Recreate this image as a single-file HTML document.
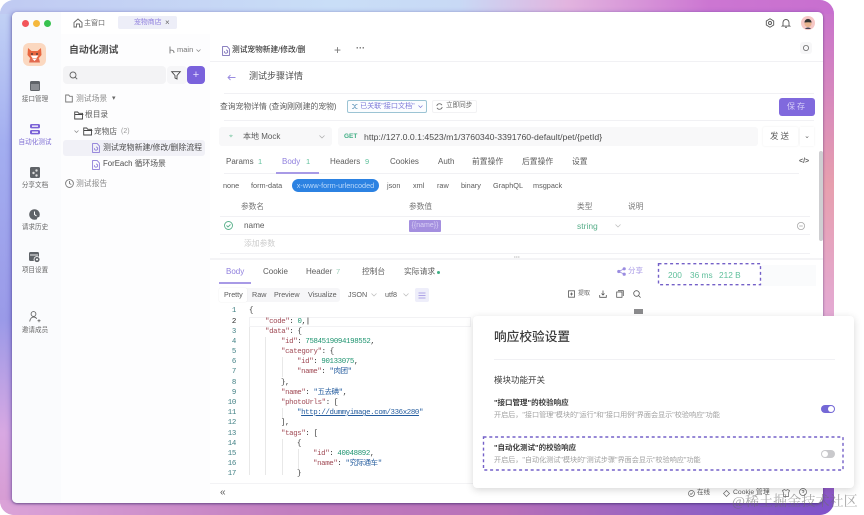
<!DOCTYPE html>
<html lang="zh"><head><meta charset="utf-8"><style>
*{box-sizing:border-box}
html,body{margin:0;padding:0;width:864px;height:515px;overflow:hidden;background:#fff}
body{font-family:"Liberation Sans","Noto Sans CJK SC",sans-serif;color:#555;position:relative}
#all{position:absolute;left:0;top:0;width:864px;height:515px;filter:blur(.3px)}
.a{position:absolute;white-space:nowrap;line-height:1}
#frame{position:absolute;left:0;top:0;width:834px;height:515px;border-radius:14px;overflow:hidden;
background:linear-gradient(180deg,#c4d4f5 0%,#a3aef0 28%,#9a9ae8 62%,#d8a8e2 84%,#d79ad0 100%)}
#ftop{position:absolute;left:0;top:0;width:834px;height:14px;background:linear-gradient(90deg,#c0caf2 0%,#c9def7 40%,#c8d9f5 55%,#e2b4df 68%,#cc76d2 85%,#c86fcf 100%)}
#fbot{position:absolute;left:0;top:500px;width:834px;height:15px;background:linear-gradient(90deg,#dba3d8 0%,#c27ebf 35%,#b870b8 60%,#8f60c4 85%,#7f52ca 100%)}
#fr{position:absolute;left:822px;top:14px;width:12px;height:486px;background:linear-gradient(180deg,#c974cc 0%,#e79fae 35%,#e3abd8 65%,#cb8ad8 85%,#8a55c8 100%)}
#win{position:absolute;left:12px;top:12px;width:811px;height:491px;background:#fff;border-radius:5px;box-shadow:0 1px 2px rgba(50,30,90,.55),-2px 0 5px rgba(70,60,170,.3)}
#side{position:absolute;left:12px;top:12px;width:49px;height:491px;background:#fafbfd;border-radius:5px 0 0 5px}
#tree{position:absolute;left:61px;top:34px;width:149px;height:469px;background:#fdfdfe}
.dot{position:absolute;width:7px;height:7px;border-radius:50%;top:19.5px}
.nav{position:absolute;left:12px;width:46px;text-align:center;font-size:6.6px;color:#666;line-height:1;white-space:nowrap}
svg{position:absolute;overflow:visible}
.code{position:absolute;font-family:"Liberation Mono","Noto Sans CJK SC",monospace;font-size:7.4px;letter-spacing:-.37px;line-height:10px;white-space:pre;color:#333}
.ln{position:absolute;left:222px;width:14px;text-align:right;font-family:"Liberation Mono",monospace;font-size:7.4px;letter-spacing:-.3px;line-height:10px;color:#3f7f83}
.k{color:#a04a55}.n{color:#1f9470}.s{color:#245c9e}
.hr{position:absolute;height:1px;background:#f1f1f4}
.t{font-size:8px;color:#5c5c5c}
.b{font-size:7.3px;color:#5c5c5c;top:182px}
.tb{font-size:7.2px;color:#5c5c5c;top:291px}
</style></head><body><div id="all">
<div id="frame"><div id="ftop"></div><div id="fbot"></div><div id="fr"></div></div>
<div id="win"></div><div id="side"></div><div id="tree"></div>

<div class="dot" style="left:22px;background:#f2555a"></div>
<div class="dot" style="left:33px;background:#f5b83d"></div>
<div class="dot" style="left:44px;background:#37c24f"></div>
<svg style="left:73px;top:18px" width="10" height="10" viewBox="0 0 10 10" fill="none" stroke="#666" stroke-width=".9"><path d="M1 4.500 5 1l4 3.500V9H6.500V6h-3v3H1z"/></svg>
<div class="a" style="left:84px;top:20px;font-size:7px;color:#666">主窗口</div>
<div class="a" style="left:118px;top:16px;width:59px;height:13px;background:#edeef8;border-radius:2px"></div>
<div class="a" style="left:134px;top:20px;font-size:6.900px;color:#9080de">宠物商店</div>
<div class="a" style="left:165px;top:19px;font-size:8px;color:#666">×</div>
<svg style="left:765px;top:18px" width="10" height="10" viewBox="0 0 10 10" fill="none" stroke="#555" stroke-width=".9"><path d="M5 .8 8.700 3v4L5 9.200 1.300 7V3z"/><circle cx="5" cy="5" r="1.500"/></svg>
<svg style="left:781px;top:18px" width="10" height="10" viewBox="0 0 10 10" fill="none" stroke="#555" stroke-width=".9"><path d="M2 7.500V4.500a3 3 0 0 1 6 0v3l.8.6H1.200zM4 9.300h2"/></svg>
<svg style="left:801px;top:16px" width="14" height="14" viewBox="0 0 14 14"><circle cx="7" cy="7" r="7" fill="#f6c8c6"/><circle cx="7" cy="7.500" r="3.600" fill="#e8b48f"/><path d="M3.400 6.500a3.600 3.600 0 0 1 7.200 0c-2-.4-5-.4-7.200 0z" fill="#333"/><path d="M4 13c1-2 5-2 6 0z" fill="#445"/></svg>

<svg style="left:23px;top:43px" width="23" height="23" viewBox="0 0 23 23"><rect width="23" height="23" rx="6" fill="#fbd8c0"/><path d="M5 5 8.500 8h6L18 5l.5 7-3 3.500h-8L4.500 12z" fill="#e8663f"/><path d="M7.500 12.500h8L13.500 15h-4z" fill="#fff"/><circle cx="9" cy="11" r=".9" fill="#333"/><circle cx="14" cy="11" r=".9" fill="#333"/><path d="M7 15.500h9l1 4H6z" fill="#e26a50"/><path d="M9 15.500h5l-2.500 2.500z" fill="#fff"/></svg>
<svg style="left:30px;top:81px" width="10" height="11" viewBox="0 0 10 11"><rect width="10" height="10" rx="1.500" fill="#5f6368"/><rect x="1" y="3" width="8" height="6" fill="#8a8d92"/></svg>
<div class="nav" style="top:97px">接口管理</div>
<svg style="left:30px;top:124px" width="10" height="11" viewBox="0 0 10 11"><rect width="10" height="4.400" rx="1.500" fill="#7a62d6"/><rect y="6" width="10" height="4.400" rx="1.500" fill="#7a62d6"/><rect x="2" y="1.500" width="6" height="1.300" fill="#fff"/><rect x="2" y="7.500" width="6" height="1.300" fill="#fff"/></svg>
<div class="nav" style="top:140px;color:#7f6ed4">自动化测试</div>
<svg style="left:30px;top:167px" width="10" height="11" viewBox="0 0 10 11"><rect width="10" height="11" rx="1.500" fill="#5f6368"/><circle cx="6.500" cy="3.500" r="1.200" fill="#ddd"/><circle cx="3.500" cy="6" r="1.200" fill="#ddd"/><circle cx="6.500" cy="8.500" r="1.200" fill="#ddd"/></svg>
<div class="nav" style="top:183px">分享文档</div>
<svg style="left:29px;top:209px" width="12" height="12" viewBox="0 0 12 12"><circle cx="5.500" cy="5.500" r="5.300" fill="#5f6368"/><path d="M5.500 2.500v3l2 1.500" stroke="#fff" fill="none"/><circle cx="9.700" cy="9.700" r="1.600" fill="#fff"/></svg>
<div class="nav" style="top:225px">请求历史</div>
<svg style="left:29px;top:252px" width="12" height="11" viewBox="0 0 12 11"><rect width="10" height="9" rx="1.500" fill="#5f6368"/><rect x="1" y="2.500" width="8" height="1" fill="#eee"/><circle cx="8" cy="7.500" r="3" fill="#5f6368" stroke="#fff" stroke-width=".8"/><circle cx="8" cy="7.500" r="1" fill="#fff"/></svg>
<div class="nav" style="top:268px">项目设置</div>
<svg style="left:29px;top:311px" width="12" height="12" viewBox="0 0 12 12" fill="none" stroke="#666" stroke-width=".9"><circle cx="4.500" cy="3" r="2.400"/><path d="M.7 10.500c.3-3 2.200-4.500 3.800-4.500s2.600.7 3.200 1.800"/><path d="M8.500 9.700h3M10 8.200v3" stroke-width=".8"/></svg>
<div class="nav" style="top:328px">邀请成员</div>

<div class="a" style="left:69px;top:46px;font-size:9.900px;font-weight:700;color:#4c4c4c">自动化测试</div>
<svg style="left:169px;top:46px" width="6" height="8" viewBox="0 0 6 8" fill="none" stroke="#666" stroke-width=".8"><path d="M1 .5v7M1 4c3 0 4 .5 4 3"/></svg>
<div class="a" style="left:177px;top:46px;font-size:7.500px;color:#777">main</div>
<svg style="left:196px;top:49px" width="5" height="3" viewBox="0 0 5 3" fill="none" stroke="#888" stroke-width=".7"><path d="M.5.500 2.500 2.500 4.500.500"/></svg>
<div class="a" style="left:63px;top:66px;width:103px;height:18px;background:#f3f3f5;border-radius:4px"></div>
<svg style="left:69px;top:71px" width="9" height="9" viewBox="0 0 9 9" fill="none" stroke="#666" stroke-width=".9"><circle cx="4" cy="4" r="3"/><path d="m6.200 6.200 2 2"/></svg>
<div class="a" style="left:167px;top:66px;width:20px;height:18px;background:#f6f6f8;border-radius:4px"></div>
<svg style="left:171px;top:71px" width="10" height="9" viewBox="0 0 10 9" fill="none" stroke="#444" stroke-width=".9"><path d="M.7.700h8.600L6 4.500V8L4 7V4.500z"/></svg>
<div class="a" style="left:187px;top:66px;width:18px;height:18px;background:#7a62dc;border-radius:4px;color:#e6e0ff;text-align:center;font-size:11px;line-height:18px">+</div>

<svg style="left:65px;top:94px" width="10" height="9" viewBox="0 0 10 9" fill="none" stroke="#777" stroke-width=".9"><path d="M.7 7.500V1h3l1 1.300h2.600V8H.7z"/></svg>
<div class="a" style="left:76px;top:95px;font-size:7.800px;color:#8c8c8c">测试场景</div>
<div class="a" style="left:112px;top:95px;font-size:7px;color:#666">▾</div>
<svg style="left:74px;top:111px" width="10" height="9" viewBox="0 0 10 9" fill="none" stroke="#444" stroke-width=".9"><path d="M.7 8V1h3l1 1.300h3.800V8zM.7 3.500h8.600"/></svg>
<div class="a" style="left:85px;top:111px;font-size:7.700px;color:#5c5c5c">根目录</div>
<svg style="left:74px;top:130px" width="5" height="3" viewBox="0 0 5 3" fill="none" stroke="#888" stroke-width=".7"><path d="M.5.500 2.500 2.500 4.500.500"/></svg>
<svg style="left:83px;top:127px" width="10" height="9" viewBox="0 0 10 9" fill="none" stroke="#444" stroke-width=".9"><path d="M.7 8V1h3l1 1.300h3.800V8zM.7 3.500h8.600"/></svg>
<div class="a" style="left:94px;top:128px;font-size:7.700px;color:#5c5c5c">宠物店</div>
<div class="a" style="left:121px;top:128px;font-size:7px;color:#999">(2)</div>
<div class="a" style="left:63px;top:140px;width:142px;height:15.500px;background:#f1f1f7;border-radius:3px"></div>
<svg style="left:92px;top:143px" width="8" height="10" viewBox="0 0 8 10" fill="none" stroke="#8d7cd8" stroke-width=".9"><path d="M.6.600h4.600L7.400 3v6.400H.6z"/><path d="M2.500 5.200a1.600 1.600 0 1 0 1.600-1.200"/></svg>
<div class="a" style="left:103px;top:144px;font-size:7.900px;color:#4c4c4c">测试宠物新建/修改/删除流程</div>
<svg style="left:92px;top:160px" width="8" height="10" viewBox="0 0 8 10" fill="none" stroke="#8d7cd8" stroke-width=".9"><path d="M.6.600h4.600L7.400 3v6.400H.6z"/><path d="M2.500 5.200a1.600 1.600 0 1 0 1.600-1.200"/></svg>
<div class="a" style="left:103px;top:160px;font-size:7.800px;color:#4c4c4c">ForEach 循环场景</div>
<svg style="left:65px;top:179px" width="9" height="9" viewBox="0 0 9 9" fill="none" stroke="#777" stroke-width=".9"><circle cx="4.500" cy="4.500" r="3.900"/><path d="M4.500 2v2.500l1.800 1"/></svg>
<div class="a" style="left:76px;top:180px;font-size:7.800px;color:#8c8c8c">测试报告</div>

<div class="hr" style="left:210px;top:61px;width:613px"></div>
<svg style="left:222px;top:46px" width="8" height="10" viewBox="0 0 8 10" fill="none" stroke="#7c70b8" stroke-width=".9"><path d="M.6.600h4.600L7.400 3v6.400H.6z"/><path d="M2.500 5.200a1.600 1.600 0 1 0 1.600-1.200"/></svg>
<div class="a" style="left:232px;top:46px;font-size:7.700px;color:#3c3c3c;font-weight:500">测试宠物新建/修改/删</div>
<div class="a" style="left:334px;top:44px;font-size:12px;color:#777">+</div>
<div class="a" style="left:356px;top:44px;font-size:9px;color:#666;font-weight:700">···</div>
<div class="a" style="left:800px;top:42px;width:12px;height:12px;border-radius:3px;background:#f7f7f8"></div>
<svg style="left:802px;top:44px" width="8" height="8" viewBox="0 0 8 8" fill="none" stroke="#666" stroke-width=".8"><circle cx="4" cy="4" r="2.600"/></svg>
<svg style="left:227px;top:74px" width="9" height="7" viewBox="0 0 9 7" fill="none" stroke="#9a8ce0" stroke-width=".9"><path d="M8.500 3.500H1M3.500 1 1 3.500 3.500 6"/></svg>
<div class="a" style="left:249px;top:72px;font-size:9px;color:#4c4c4c">测试步骤详情</div>
<div class="hr" style="left:224px;top:93px;width:590px"></div>
<div class="a" style="left:220px;top:103px;font-size:7.800px;color:#5c5c5c">查询宠物详情 (查询刚刚建的宠物)</div>
<div class="a" style="left:347px;top:100px;width:80px;height:13px;border:1px solid #9cc4d4;border-radius:2px;background:#fbfdff"></div>
<svg style="left:351px;top:103px" width="7" height="7" viewBox="0 0 7 7" fill="none" stroke="#6e9fc0" stroke-width=".8"><path d="M1 1.500h1.500L5 5.500h1.500M1 5.500h1.500L5 1.500h1.500"/></svg>
<div class="a" style="left:360px;top:103px;font-size:7.100px;color:#7b78d8">已关联"接口文档"</div>
<svg style="left:418px;top:105px" width="5" height="3" viewBox="0 0 5 3" fill="none" stroke="#7b78d8" stroke-width=".7"><path d="M.5.500 2.500 2.500 4.500.500"/></svg>
<div class="a" style="left:432px;top:100px;width:45px;height:13px;border:1px solid #f2f2f4;border-radius:2px"></div>
<svg style="left:436px;top:103px" width="7" height="7" viewBox="0 0 7 7" fill="none" stroke="#666" stroke-width=".8"><path d="M6 2.200A2.800 2.800 0 0 0 .8 3M1 4.800A2.800 2.800 0 0 0 6.200 4"/></svg>
<div class="a" style="left:446px;top:103px;font-size:6.600px;color:#666">立即同步</div>
<div class="a" style="left:779px;top:98px;width:36px;height:18px;background:#8069dd;border-radius:3px;color:#d8d0f8;font-size:8px;line-height:18px;text-align:center;letter-spacing:2px">保存</div>
<div class="hr" style="left:224px;top:120px;width:590px"></div>

<div class="a" style="left:219px;top:127px;width:113px;height:19px;background:#f8f8f9;border-radius:3px"></div>
<div class="a" style="left:229px;top:133px;font-size:7px;color:#7cc7a4">⌖</div>
<div class="a" style="left:243px;top:133px;font-size:8px;color:#5c5c5c">本地 Mock</div>
<svg style="left:319px;top:135px" width="6" height="4" viewBox="0 0 6 4" fill="none" stroke="#aaa" stroke-width=".7"><path d="M.5.500 3 3 5.500.500"/></svg>
<div class="a" style="left:338px;top:127px;width:420px;height:19px;background:#f8f8f9;border-radius:3px"></div>
<div class="a" style="left:344px;top:134px;font-size:6.500px;font-weight:700;color:#3fae84">GET</div>
<div class="a" style="left:364px;top:133px;font-size:8.700px;color:#4c4c4c">http://127.0.0.1:4523/m1/3760340-3391760-default/pet/{petId}</div>
<div class="a" style="left:763px;top:127px;width:35px;height:19px;background:#fff;box-shadow:0 0 2px #eee;border-radius:2px;color:#5c5c5c;font-size:8.500px;line-height:19px;text-align:center;letter-spacing:2px">发送</div>
<div class="a" style="left:800px;top:127px;width:14px;height:19px;background:#fff;box-shadow:0 0 2px #eee;color:#666;font-size:7px;line-height:19px;text-align:center">⌄</div>

<div class="a t" style="left:226px;top:158px">Params</div><div class="a" style="left:258px;top:158px;font-size:7.500px;color:#5fc09c">1</div>
<div class="a t" style="left:282px;top:158px;color:#9080de">Body</div><div class="a" style="left:306px;top:158px;font-size:7.500px;color:#5fc09c">1</div>
<div class="a t" style="left:330px;top:158px">Headers</div><div class="a" style="left:365px;top:158px;font-size:7.500px;color:#5fc09c">9</div>
<div class="a t" style="left:390px;top:158px">Cookies</div>
<div class="a t" style="left:438px;top:158px">Auth</div>
<div class="a t" style="left:472px;top:158px;font-size:7.800px">前置操作</div>
<div class="a t" style="left:522px;top:158px;font-size:7.800px">后置操作</div>
<div class="a t" style="left:572px;top:158px;font-size:7.800px">设置</div>
<div class="a" style="left:799px;top:158px;font-size:7px;color:#555;font-weight:700">&lt;/&gt;</div>
<div class="hr" style="left:224px;top:173px;width:575px"></div>
<div class="a" style="left:276px;top:172px;width:43px;height:1.500px;background:#a89ae6"></div>

<div class="a b" style="left:223px">none</div>
<div class="a b" style="left:251px">form-data</div>
<div class="a" style="left:292px;top:179px;width:87px;height:13px;background:#2c82e2;border-radius:6.500px;color:#b9d8fa;font-size:7.300px;line-height:13px;text-align:center">x-www-form-urlencoded</div>
<div class="a b" style="left:387px">json</div>
<div class="a b" style="left:413px">xml</div>
<div class="a b" style="left:437px">raw</div>
<div class="a b" style="left:461px">binary</div>
<div class="a b" style="left:493px">GraphQL</div>
<div class="a b" style="left:533px">msgpack</div>

<div class="a" style="left:241px;top:203px;font-size:7.700px;color:#777">参数名</div>
<div class="a" style="left:409px;top:203px;font-size:7.700px;color:#777">参数值</div>
<div class="a" style="left:577px;top:203px;font-size:7.700px;color:#777">类型</div>
<div class="a" style="left:628px;top:203px;font-size:7.700px;color:#777">说明</div>
<div class="hr" style="left:220px;top:216px;width:590px"></div>
<svg style="left:224px;top:221px" width="9" height="9" viewBox="0 0 9 9" fill="none" stroke="#58b08a" stroke-width=".9"><circle cx="4.500" cy="4.500" r="4"/><path d="m2.500 4.500 1.500 1.500 2.500-2.500"/></svg>
<div class="a" style="left:244px;top:222px;font-size:8.200px;color:#5c5c5c">name</div>
<div class="a" style="left:409px;top:220px;width:32px;height:12px;background:#a48fdf;border-radius:1px;color:#d9d0f5;font-size:7px;line-height:12px;text-align:center">{{name}}</div>
<div class="a" style="left:577px;top:222px;font-size:8.500px;color:#58ae8a">string</div>
<svg style="left:615px;top:224px" width="6" height="4" viewBox="0 0 6 4" fill="none" stroke="#bbb" stroke-width=".7"><path d="M.5.500 3 3 5.500.500"/></svg>
<svg style="left:797px;top:222px" width="8" height="8" viewBox="0 0 8 8" fill="none" stroke="#aaa" stroke-width=".8"><circle cx="4" cy="4" r="3.600"/><path d="M2.200 4h3.600"/></svg>
<div class="hr" style="left:220px;top:234px;width:590px"></div>
<div class="a" style="left:244px;top:240px;font-size:7.800px;color:#ccc">添加参数</div>
<div class="hr" style="left:220px;top:253px;width:590px"></div>
<div class="a" style="left:819px;top:151px;width:4px;height:90px;background:#cfcfd2;border-radius:2px"></div>

<div class="a" style="left:210px;top:258px;width:613px;height:2px;background:#f4f4f6"></div>
<div class="a" style="left:514px;top:255px;font-size:6px;color:#888;font-weight:700">···</div>
<div class="a t" style="left:226px;top:268px;color:#9080de">Body</div>
<div class="a t" style="left:263px;top:268px">Cookie</div>
<div class="a t" style="left:306px;top:268px">Header</div><div class="a" style="left:336px;top:268px;font-size:7.500px;color:#9dcfba">7</div>
<div class="a t" style="left:362px;top:268px;font-size:7.700px">控制台</div>
<div class="a t" style="left:404px;top:268px;font-size:7.800px">实际请求</div>
<div class="a" style="left:437px;top:270.500px;width:3px;height:3px;border-radius:50%;background:#3fae84"></div>
<div class="a" style="left:219px;top:282px;width:32px;height:1.500px;background:#a89ae6"></div>
<svg style="left:617px;top:267px" width="9" height="9" viewBox="0 0 9 9" fill="#9a8ce0" stroke="#9a8ce0" stroke-width=".8"><circle cx="1.800" cy="4.500" r="1.200"/><circle cx="7.200" cy="1.800" r="1.200"/><circle cx="7.200" cy="7.200" r="1.200"/><path d="M1.800 4.500 7.200 1.800M1.800 4.500 7.200 7.200"/></svg>
<div class="a" style="left:628px;top:267px;font-size:7.500px;color:#a89ae6">分享</div>
<svg style="left:0;top:0" width="864" height="515" fill="none" stroke="#7460c8" stroke-width="1.400" stroke-dasharray="3 2.800"><rect x="658.500" y="263.700" width="102" height="21"/></svg>
<div class="a" style="left:668px;top:271px;font-size:8.300px;color:#5fbf9b">200</div>
<div class="a" style="left:690px;top:271px;font-size:8.300px;color:#5fbf9b">36 ms</div>
<div class="a" style="left:719px;top:271px;font-size:8.300px;color:#5fbf9b">212 B</div>
<div class="a" style="left:762px;top:265px;width:54px;height:21px;background:#fafbfc"></div>

<div class="a" style="left:219px;top:288px;width:121px;height:14px;background:#f6f6f8;border-radius:3px"></div>
<div class="a" style="left:219px;top:288px;width:28px;height:14px;background:#fff;border-radius:2px;box-shadow:0 0 1px #ddd"></div>
<div class="a tb" style="left:224px">Pretty</div>
<div class="a tb" style="left:252px">Raw</div>
<div class="a tb" style="left:274px">Preview</div>
<div class="a tb" style="left:308px">Visualize</div>
<div class="a tb" style="left:348px">JSON</div>
<svg style="left:371px;top:292.500px" width="6" height="4" viewBox="0 0 6 4" fill="none" stroke="#bbb" stroke-width=".7"><path d="M.5.500 3 3 5.500.500"/></svg>
<div class="a tb" style="left:385px">utf8</div>
<svg style="left:403px;top:292.500px" width="6" height="4" viewBox="0 0 6 4" fill="none" stroke="#bbb" stroke-width=".7"><path d="M.5.500 3 3 5.500.500"/></svg>
<div class="a" style="left:415px;top:288px;width:14px;height:14px;background:#eeeefa;border-radius:2px"></div>
<svg style="left:418px;top:291.500px" width="8" height="7" viewBox="0 0 8 7" fill="none" stroke="#9a8ce0" stroke-width=".8"><path d="M.5 1h7M.500 3.500h7M.500 6h7"/></svg>
<svg style="left:568px;top:290px" width="7" height="8" viewBox="0 0 7 8" fill="none" stroke="#555" stroke-width=".8"><rect x=".5" y=".8" width="6" height="6.400"/><path d="M2 4h3M3.500 2.500v3"/></svg>
<div class="a" style="left:578px;top:291px;font-size:6px;color:#666">提取</div>
<svg style="left:599px;top:290px" width="8" height="8" viewBox="0 0 8 8" fill="none" stroke="#555" stroke-width=".8"><path d="M4 .5v4.500M2.500 3.500 4 5l1.500-1.500M.7 5v2.300h6.600V5"/></svg>
<svg style="left:616px;top:290px" width="8" height="8" viewBox="0 0 8 8" fill="none" stroke="#555" stroke-width=".8"><rect x=".7" y="2" width="5.300" height="5.300"/><path d="M2 .7h5.300V6"/></svg>
<svg style="left:633px;top:290px" width="8" height="8" viewBox="0 0 8 8" fill="none" stroke="#555" stroke-width=".8"><circle cx="3.500" cy="3.500" r="2.800"/><path d="m5.600 5.600 2 2"/></svg>

<div class="a" style="left:249px;top:317px;width:222px;height:10px;border:1px solid #f2f2f4"></div>
<div class="a" style="left:634px;top:309px;width:9px;height:5px;background:#8b8b8d"></div>
<div class="ln" style="top:306px">1</div><div class="ln" style="top:317px;color:#222">2</div><div class="ln" style="top:327px">3</div><div class="ln" style="top:337px">4</div><div class="ln" style="top:347px">5</div><div class="ln" style="top:357px">6</div><div class="ln" style="top:367px">7</div><div class="ln" style="top:378px">8</div><div class="ln" style="top:388px">9</div><div class="ln" style="top:398px">10</div><div class="ln" style="top:408px">11</div><div class="ln" style="top:418px">12</div><div class="ln" style="top:429px">13</div><div class="ln" style="top:439px">14</div><div class="ln" style="top:449px">15</div><div class="ln" style="top:459px">16</div><div class="ln" style="top:469px">17</div>
<div class="a" style="left:249px;top:327px;width:1px;height:148px;background:#e8e8e8"></div>
<div class="a" style="left:265px;top:337px;width:1px;height:138px;background:#e8e8e8"></div>
<div class="a" style="left:282px;top:357px;width:1px;height:20px;background:#e8e8e8"></div>
<div class="a" style="left:282px;top:408px;width:1px;height:10px;background:#e8e8e8"></div>
<div class="a" style="left:282px;top:439px;width:1px;height:36px;background:#e8e8e8"></div>
<div class="a" style="left:298px;top:449px;width:1px;height:20px;background:#e8e8e8"></div>
<div class="code" style="left:249px;top:306px">{</div>
<div class="code" style="left:265px;top:317px"><span class="k">"code"</span>: <span class="n">0</span>,<span style="color:#000">|</span></div>
<div class="code" style="left:265px;top:327px"><span class="k">"data"</span>: {</div>
<div class="code" style="left:281px;top:337px"><span class="k">"id"</span>: <span class="n">7584519094198552</span>,</div>
<div class="code" style="left:281px;top:347px"><span class="k">"category"</span>: {</div>
<div class="code" style="left:297px;top:357px"><span class="k">"id"</span>: <span class="n">90133075</span>,</div>
<div class="code" style="left:297px;top:367px"><span class="k">"name"</span>: <span class="s">"肉团"</span></div>
<div class="code" style="left:281px;top:378px">},</div>
<div class="code" style="left:281px;top:388px"><span class="k">"name"</span>: <span class="s">"五去碘"</span>,</div>
<div class="code" style="left:281px;top:398px"><span class="k">"photoUrls"</span>: [</div>
<div class="code" style="left:297px;top:408px"><span class="s">"<u>http://dummyimage.com/336x280</u>"</span></div>
<div class="code" style="left:281px;top:418px">],</div>
<div class="code" style="left:281px;top:429px"><span class="k">"tags"</span>: [</div>
<div class="code" style="left:297px;top:439px">{</div>
<div class="code" style="left:313px;top:449px"><span class="k">"id"</span>: <span class="n">40048892</span>,</div>
<div class="code" style="left:313px;top:459px"><span class="k">"name"</span>: <span class="s">"究际通车"</span></div>
<div class="code" style="left:297px;top:469px">}</div>
<div class="a" style="left:210px;top:483px;width:613px;height:1px;background:#f3f3f5"></div>
<div class="a" style="left:220px;top:488px;font-size:10px;color:#555">«</div>

<svg style="left:688px;top:490px" width="7" height="7" viewBox="0 0 7 7" fill="none" stroke="#666" stroke-width=".7"><circle cx="3.500" cy="3.500" r="3"/><path d="m2 3.500 1 1 2-2"/></svg>
<div class="a" style="left:697px;top:490px;font-size:6.500px;color:#5c5c5c">在线</div>
<svg style="left:723px;top:490px" width="7" height="7" viewBox="0 0 7 7" fill="none" stroke="#666" stroke-width=".7"><path d="M3.500.500 6.500 3.500 3.500 6.500.500 3.500z"/></svg>
<div class="a" style="left:733px;top:490px;font-size:6.800px;color:#5c5c5c">Cookie 管理</div>
<svg style="left:782px;top:489px" width="8" height="8" viewBox="0 0 8 8" fill="none" stroke="#666" stroke-width=".7"><path d="M.5 1.500 2.500.5 4 1.500 5.500.5l2 1L6.500 4v3.500h-5V4z"/></svg>
<svg style="left:799px;top:488px" width="8" height="8" viewBox="0 0 8 8" fill="none" stroke="#666" stroke-width=".7"><circle cx="4" cy="4" r="3.500"/><path d="M3 3a1 1 0 1 1 1 1.200V5"/></svg>

<div class="a" style="left:473px;top:316px;width:381px;height:172px;background:#fff;border-radius:4px;box-shadow:0 2px 8px rgba(0,0,0,.16)"></div>
<div class="a" style="left:494px;top:331px;font-size:12.700px;color:#3c3c3c;font-weight:500">响应校验设置</div>
<div class="hr" style="left:494px;top:359px;width:341px"></div>
<div class="a" style="left:494px;top:376px;font-size:8.500px;color:#3c3c3c">模块功能开关</div>
<div class="a" style="left:494px;top:399px;font-size:7.500px;color:#3c3c3c;font-weight:700">"接口管理"的校验响应</div>
<div class="a" style="left:494px;top:412px;font-size:7.100px;color:#a0a0a0">开启后，"接口管理"模块的"运行"和"接口用例"界面会显示"校验响应"功能</div>
<div class="a" style="left:821px;top:405px;width:14px;height:8px;border-radius:4px;background:#7468d6"></div>
<div class="a" style="left:828px;top:406px;width:6px;height:6px;border-radius:50%;background:#fff"></div>
<svg style="left:0;top:0" width="864" height="515" fill="none" stroke="#7460c8" stroke-width="1.400" stroke-dasharray="3 2.800"><rect x="483.500" y="437" width="359.500" height="33"/></svg>
<div class="a" style="left:494px;top:444px;font-size:7.500px;color:#3c3c3c;font-weight:700">"自动化测试"的校验响应</div>
<div class="a" style="left:494px;top:457px;font-size:7.100px;color:#a0a0a0">开启后，"自动化测试"模块的"测试步骤"界面会显示"校验响应"功能</div>
<div class="a" style="left:821px;top:450px;width:14px;height:8px;border-radius:4px;background:#c9c9cc"></div>
<div class="a" style="left:822px;top:451px;width:6px;height:6px;border-radius:50%;background:#fff"></div>

<div class="a" style="left:732px;top:495px;font-size:14.100px;color:rgba(110,110,110,.6);font-family:'Liberation Serif','Noto Serif CJK SC',serif">@稀土掘金技术社区</div>
</div></body></html>
